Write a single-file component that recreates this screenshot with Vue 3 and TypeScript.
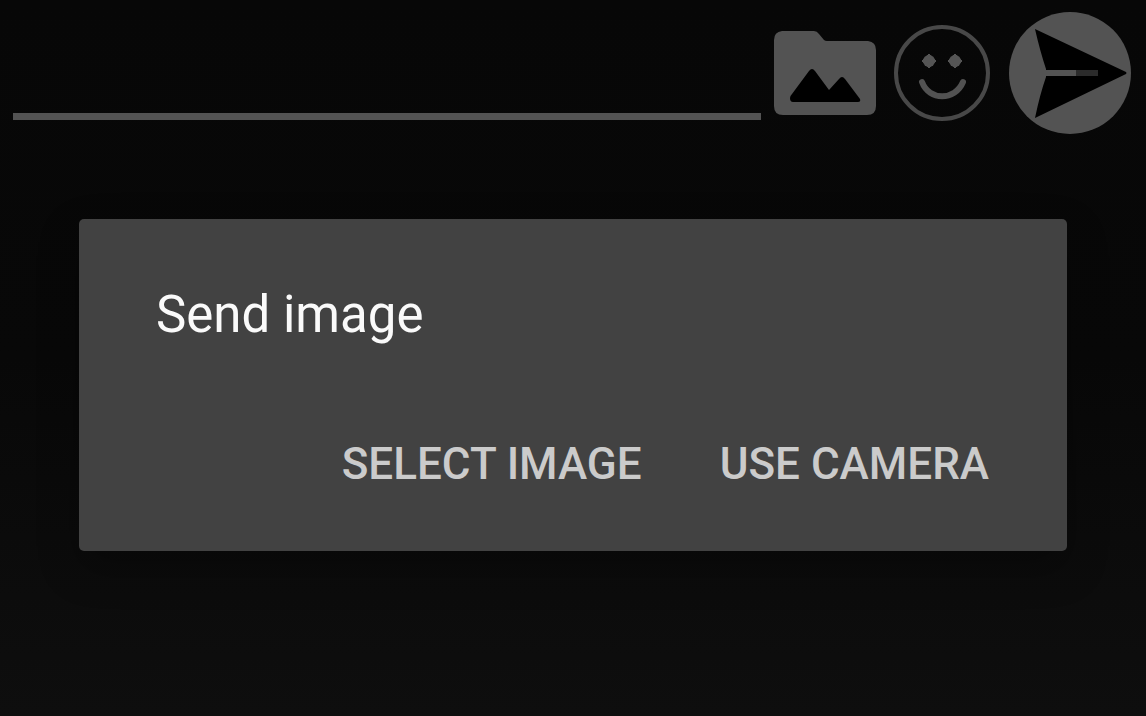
<script setup lang="ts">
import { ref } from 'vue'

const message = ref('')
const actions: string[] = ['Select image', 'Use camera']
</script>

<template>
  <main class="screen">
    <form class="composer" @submit.prevent>
      <input v-model="message" class="message" type="text" aria-label="Message" />
      <button class="icon folder" type="button" aria-label="Send image">
        <svg viewBox="0 0 102 84" width="102" height="84">
          <path
            fill="#535353"
            d="M8 0H40Q43 0 45 3L50 9Q51 10 53 10H94Q102 11 102 19V75Q102 84 93 84H9Q0 84 0 75V9Q0 1 8 0Z"
          />
          <path
            fill="#000"
            d="M16 67Q16 65 18 63L35 40Q38 36 41 40L55 59L65 48Q68 44 71 48L86 68Q87 71 84 71H19Q16 71 16 67Z"
          />
        </svg>
      </button>
      <button class="icon smiley" type="button" aria-label="Emoji">
        <svg viewBox="0 0 98 98" width="98" height="98" fill="none">
          <circle cx="49" cy="49" r="46" stroke="#484848" stroke-width="4" />
          <path d="M36 30L43 37L36 44L29 37Z M62 30L69 37L62 44L55 37Z" fill="#555" stroke="#555" stroke-width="1" stroke-linejoin="round" />
          <circle cx="36" cy="37" r="6" fill="#555" />
          <circle cx="62" cy="37" r="6" fill="#555" />
          <path
            d="M29 58C36 77 62 77 70 58"
            stroke="#525252"
            stroke-width="6"
            stroke-linecap="round"
          />
        </svg>
      </button>
      <button class="icon send" type="submit" aria-label="Send">
        <svg viewBox="0 0 122 122" width="122" height="122">
          <circle cx="61" cy="61" r="61" fill="#535353" />
          <path fill="#000" d="M26 17L117 60Q118 61 117 62L26 106Q31 82 37 65V57Q31 39 26 17Z" />
          <path fill="#535353" d="M36 58H67V64H36Z" />
          <path fill="#2b2b2b" d="M67 58H89V64H67Z" />
        </svg>
      </button>
    </form>

    <section class="dialog" role="dialog" aria-labelledby="dialog-title">
      <h1 id="dialog-title" class="title">Send image</h1>
      <div class="actions">
        <button v-for="action in actions" :key="action" class="action" type="button">
          {{ action }}
        </button>
      </div>
    </section>
  </main>
</template>

<style>
body {
  margin: 0;
  background: #0d0d0d;
}
</style>

<style scoped>
.screen {
  box-sizing: border-box;
  min-height: 100vh;
  background: linear-gradient(#070707, #080808 50%, #0e0e0e);
  font-family: Roboto, "Liberation Sans", sans-serif;
}

.composer {
  display: flex;
  align-items: center;
  padding: 12px 15px 12px 13px;
}

.message {
  flex: 1;
  min-width: 0;
  box-sizing: border-box;
  height: 94px;
  margin-right: 13px;
  padding: 0;
  border: 0;
  border-bottom: 7px solid #535353;
  background: transparent;
  color: #fff;
  font: 400 44px/60px Roboto, "Liberation Sans", sans-serif;
  outline: none;
}

.icon {
  display: block;
  flex: none;
  padding: 0;
  border: 0;
  background: transparent;
}

.icon svg {
  display: block;
}

.smiley {
  margin: 0 18px 0 17px;
}

.dialog {
  margin: 73px 79px 0;
  padding: 66px 54px 33px;
  border-radius: 5px;
  background: #424242;
  box-shadow: 0 16px 40px rgba(0, 0, 0, 0.3);
}

.title {
  margin: 0 23px 65px;
  color: #fafafa;
  font-size: 51px;
  font-weight: 400;
  line-height: 60px;
}

.actions {
  display: flex;
  justify-content: flex-end;
  gap: 30px;
}

.action {
  height: 108px;
  padding: 0 24px;
  border: 0;
  background: transparent;
  color: #cbcbcb;
  font: 500 44px/60px Roboto, "Liberation Sans", sans-serif;
  text-transform: uppercase;
  white-space: nowrap;
}
</style>
